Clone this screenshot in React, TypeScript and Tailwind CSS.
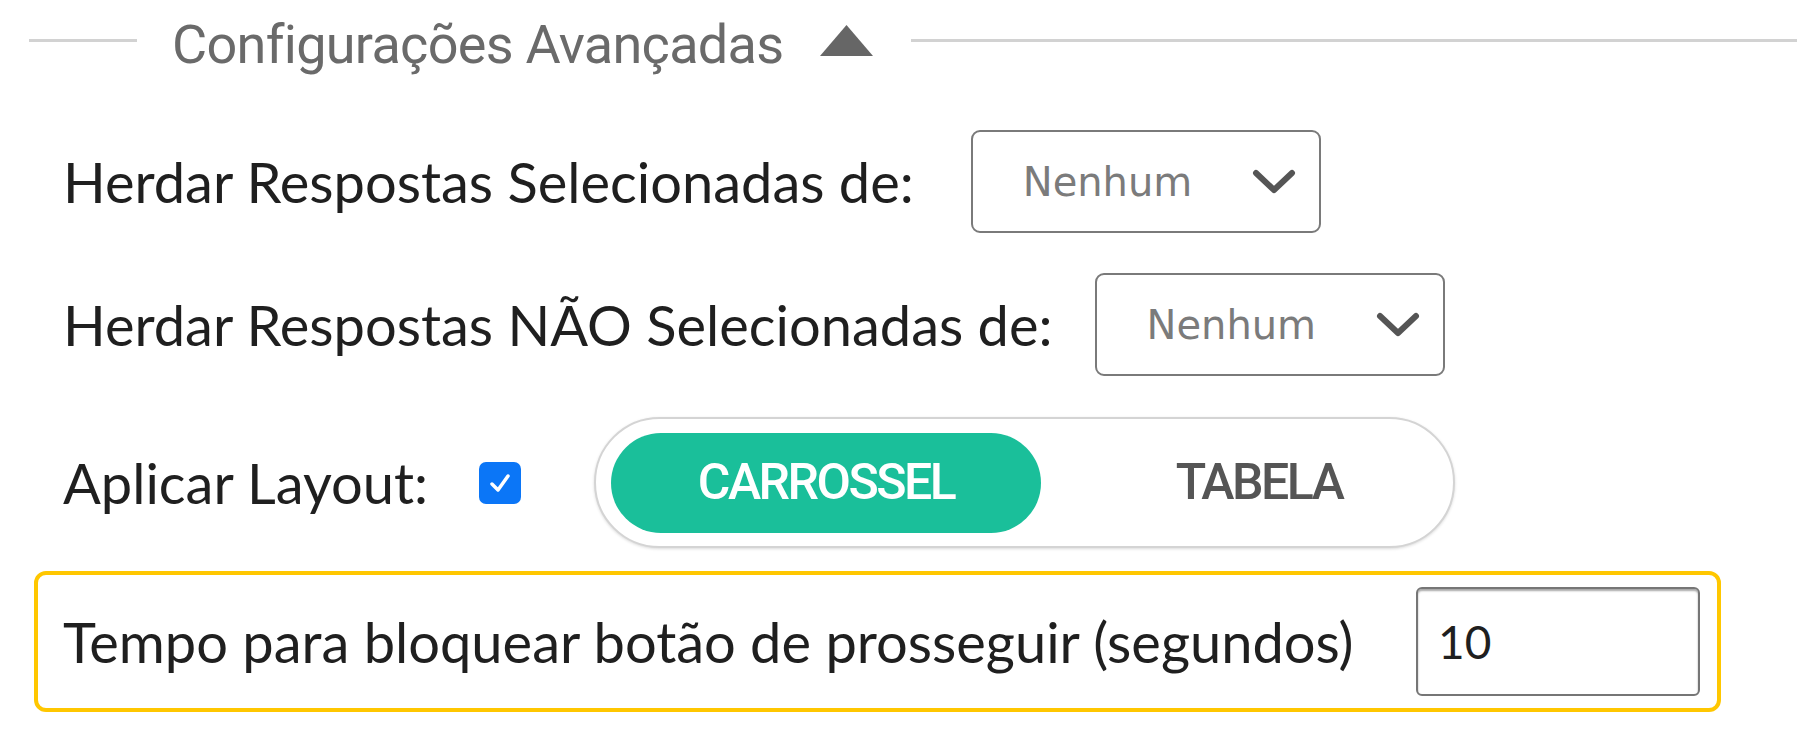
import * as React from "react";

const body = { fontFamily: "Lato, 'Open Sans', sans-serif" };
const cond = { fontFamily: "Roboto, 'Liberation Sans', sans-serif" };

function Chevron() {
  return (
    <svg width="46" height="28" viewBox="0 0 46 28" fill="none">
      <polyline
        points="5,5 23,22 41,5"
        stroke="#555"
        strokeWidth="6"
        strokeLinecap="round"
        strokeLinejoin="round"
      />
    </svg>
  );
}

function FakeSelect({ value }: { value: string }) {
  return (
    <div className="flex h-[103px] w-[350px] items-center justify-between rounded-[9px] border-2 border-[#7a7a7a] bg-white pl-[50px] pr-[22px]">
      <span
        className="text-[40px] text-[#7b7b7b]"
        style={{ fontFamily: "'DejaVu Sans', Verdana, sans-serif" }}
      >
        {value}
      </span>
      <Chevron />
    </div>
  );
}

export default function App() {
  const [layout, setLayout] = React.useState<"carrossel" | "tabela">("carrossel");
  const [checked, setChecked] = React.useState(true);

  return (
    <div className="min-h-[750px] w-full bg-white text-[#1f1f1f]" style={body}>
      {/* section header */}
      <div className="flex h-[80px] items-center pl-[29px]">
        <div className="h-[3px] w-[108px] bg-[#d2d2d2]" />
        <span className="ml-[35px] pt-[8px] text-[54px] tracking-[-0.7px] text-[#6a6a6a]" style={cond}>
          Configurações Avançadas
        </span>
        <svg className="ml-[37px]" width="53" height="31" viewBox="0 0 53 31">
          <polygon points="26.5,0 53,31 0,31" fill="#666" />
        </svg>
        <div className="ml-[38px] h-[3px] flex-1 bg-[#d2d2d2]" />
      </div>

      <div className="flex flex-col px-[34px]">
        <div className="mt-[50px] flex items-center pl-[29px]">
          <span className="text-[56px]">Herdar Respostas Selecionadas de:</span>
          <div className="ml-[57px]">
            <FakeSelect value="Nenhum" />
          </div>
        </div>

        <div className="mt-[40px] flex items-center pl-[29px]">
          <span className="text-[56px]">Herdar Respostas NÃO Selecionadas de:</span>
          <div className="ml-[42px]">
            <FakeSelect value="Nenhum" />
          </div>
        </div>

        <div className="mt-[41px] flex items-center pl-[29px]">
          <span className="text-[56px]">Aplicar Layout:</span>
          <button
            type="button"
            onClick={() => setChecked(!checked)}
            className={`ml-[51px] flex h-[42px] w-[42px] items-center justify-center rounded-[7px] ${
              checked ? "bg-[#0b76f7]" : "border-2 border-[#767676] bg-white"
            }`}
          >
            {checked ? (
              <svg width="28" height="28" viewBox="0 0 28 28" fill="none">
                <polyline
                  points="6,15 12,21 22,7"
                  stroke="white"
                  strokeWidth="3.5"
                  strokeLinecap="round"
                  strokeLinejoin="round"
                />
              </svg>
            ) : null}
          </button>

          <div className="ml-[73px] flex h-[131px] w-[861px] items-center rounded-full border-2 border-[#d4d4d4] bg-white pl-[15px] shadow-[0_1px_3px_rgba(0,0,0,0.15)]">
            <button
              type="button"
              onClick={() => setLayout("carrossel")}
              className={`flex h-[100px] w-[430px] items-center justify-center rounded-full text-[50px] font-medium tracking-[-2.5px] ${
                layout === "carrossel" ? "bg-[#1abf9a] text-white" : "text-[#555]"
              }`}
              style={cond}
            >
              CARROSSEL
            </button>
            <button
              type="button"
              onClick={() => setLayout("tabela")}
              className={`flex h-[100px] w-[400px] items-center justify-center rounded-full pl-[36px] text-[50px] font-medium tracking-[-2.5px] ${
                layout === "tabela" ? "bg-[#1abf9a] text-white" : "text-[#555]"
              }`}
              style={cond}
            >
              TABELA
            </button>
          </div>
        </div>

        <div className="mt-[23px] flex h-[141px] w-[1687px] items-center rounded-[12px] border-4 border-[#ffc700] pl-[25px] pr-[17px]">
          <span className="text-[56px]">Tempo para bloquear botão de prosseguir (segundos)</span>
          <input
            defaultValue="10"
            className="ml-auto h-[109px] w-[284px] rounded-[6px] border-2 border-[#767676] px-[20px] text-[46px] text-[#1f1f1f] shadow-[inset_0_2px_2px_rgba(0,0,0,0.35)] outline-none"
            style={body}
          />
        </div>
      </div>
    </div>
  );
}
